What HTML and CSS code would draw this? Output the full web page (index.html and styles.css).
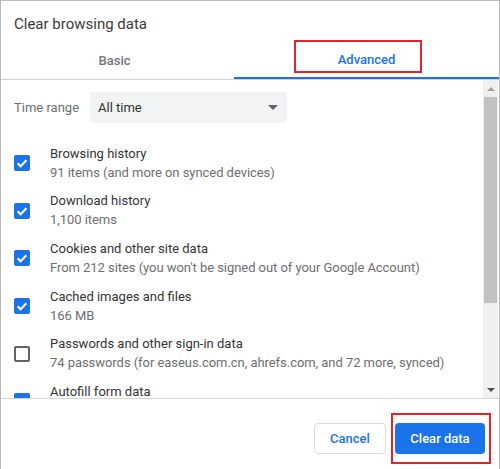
FILE: index.html
```html
<!DOCTYPE html>
<html lang="en">
<head>
    <meta charset="UTF-8">
    <title>Clear browsing data</title>
    <link rel="stylesheet" href="styles.css">
</head>
<body>
    <div class="dialog">
        <h1 class="dialog-title">Clear browsing data</h1>

        <div class="tabs">
            <div class="tab">Basic</div>
            <div class="tab active">
                Advanced
                <span class="highlight tab-highlight"></span>
            </div>
        </div>

        <div class="body">
            <div class="list">
                <div class="time-range">
                    <span class="time-label">Time range</span>
                    <div class="select">
                        <span>All time</span>
                        <span class="select-arrow"></span>
                    </div>
                </div>

                <div class="item">
                    <span class="check on"><svg viewBox="0 0 16 16"><path d="M3.6 8.2l3 3 5.8-6" /></svg></span>
                    <div class="item-text">
                        <div class="item-title">Browsing history</div>
                        <div class="item-sub">91 items (and more on synced devices)</div>
                    </div>
                </div>
                <div class="item">
                    <span class="check on"><svg viewBox="0 0 16 16"><path d="M3.6 8.2l3 3 5.8-6" /></svg></span>
                    <div class="item-text">
                        <div class="item-title">Download history</div>
                        <div class="item-sub">1,100 items</div>
                    </div>
                </div>
                <div class="item">
                    <span class="check on"><svg viewBox="0 0 16 16"><path d="M3.6 8.2l3 3 5.8-6" /></svg></span>
                    <div class="item-text">
                        <div class="item-title">Cookies and other site data</div>
                        <div class="item-sub">From 212 sites (you won't be signed out of your Google Account)</div>
                    </div>
                </div>
                <div class="item">
                    <span class="check on"><svg viewBox="0 0 16 16"><path d="M3.6 8.2l3 3 5.8-6" /></svg></span>
                    <div class="item-text">
                        <div class="item-title">Cached images and files</div>
                        <div class="item-sub">166 MB</div>
                    </div>
                </div>
                <div class="item">
                    <span class="check"></span>
                    <div class="item-text">
                        <div class="item-title">Passwords and other sign-in data</div>
                        <div class="item-sub">74 passwords (for easeus.com.cn, ahrefs.com, and 72 more, synced)</div>
                    </div>
                </div>
                <div class="item">
                    <span class="check on"><svg viewBox="0 0 16 16"><path d="M3.6 8.2l3 3 5.8-6" /></svg></span>
                    <div class="item-text">
                        <div class="item-title">Autofill form data</div>
                    </div>
                </div>
            </div>

            <!-- classic scrollbar -->
            <div class="scrollbar">
                <span class="sb-arrow up"></span>
                <div class="sb-track">
                    <div class="sb-thumb"></div>
                </div>
                <span class="sb-arrow down"></span>
            </div>
        </div>

        <div class="footer">
            <button class="btn btn-cancel">Cancel</button>
            <button class="btn btn-primary">
                Clear data
                <span class="highlight btn-highlight"></span>
            </button>
        </div>
    </div>
</body>
</html>
```

FILE: styles.css
```css
:root {
    --blue: #1a73e8;
    --text: #333333;
    --muted: #6e6e6e;
    --line: #dadce0;
    --frame: #b9b9b9;
    --mark: #e8212b;
}

* {
    box-sizing: border-box;
}

body {
    margin: 0;
    font-family: Roboto, "Liberation Sans", sans-serif;
    color: var(--text);
    background: #fff;
}

.dialog {
    width: 500px;
    height: 469px;
    border: 1px solid var(--frame);
    border-bottom: none;
    display: flex;
    flex-direction: column;
    overflow: hidden;
}

.dialog-title {
    margin: 0;
    padding: 14px 0 0 13px;
    height: 39px;
    font-size: 15px;
    font-weight: 400;
    line-height: 18px;
    color: #3a3a3a;
}

/* tab strip */
.tabs {
    display: grid;
    grid-template-columns: 233px 1fr;
    height: 40px;
    border-bottom: 1px solid #d2d2d2;
}

.tab {
    position: relative;
    display: flex;
    align-items: center;
    justify-content: center;
    font-size: 13px;
    font-weight: 500;
    color: #747474;
    padding: 1px 6px 0 0;
}

.tab.active {
    color: var(--blue);
    border-bottom: 2px solid var(--blue);
    padding: 1px 0 0 0;
}

.highlight {
    position: absolute;
    border: 2px solid var(--mark);
    pointer-events: none;
}

.tab-highlight {
    left: 60px;
    top: 0;
    width: 128px;
    height: 33px;
}

/* scrolling body */
.body {
    display: flex;
    height: 319px;
    border-bottom: 1px solid #d6d6d6;
}

.list {
    flex: 1;
    overflow: hidden;
    padding: 12px 0 0 13px;
}

.time-range {
    display: flex;
    align-items: center;
    height: 31px;
    margin-bottom: 16px;
}

.time-label {
    width: 76px;
    font-size: 13px;
    color: var(--muted);
}

.select {
    width: 197px;
    height: 31px;
    background: #f1f3f4;
    border-radius: 4px;
    display: flex;
    align-items: center;
    justify-content: space-between;
    padding: 0 9px 0 8px;
    font-size: 13px;
    color: var(--text);
}

.select-arrow {
    width: 0;
    height: 0;
    border-left: 5px solid transparent;
    border-right: 5px solid transparent;
    border-top: 5px solid #5f6368;
}

.item {
    display: flex;
    align-items: center;
    padding: 4.8px 0;
}

.item-text {
    min-height: 38px;
}

.check {
    flex: none;
    width: 16px;
    height: 16px;
    margin: 1px 20px 0 0;
    border: 2px solid #5f6368;
    border-radius: 2px;
    display: flex;
}

.check.on {
    background: var(--blue);
    border-color: var(--blue);
}

.check svg {
    margin: -2px;
    width: 16px;
    height: 16px;
    flex: none;
}

.check path {
    fill: none;
    stroke: #fff;
    stroke-width: 2;
}

.item-title,
.item-sub {
    font-size: 13px;
    line-height: 19px;
    white-space: nowrap;
}

.item-title {
    color: var(--text);
}

.item-sub {
    color: var(--muted);
    letter-spacing: -0.05px;
}

.scrollbar {
    flex: none;
    width: 15px;
    margin-right: 1px;
    background: #f0f0f0;
    display: flex;
    flex-direction: column;
    align-items: center;
}

.sb-arrow {
    flex: none;
    height: 17px;
    width: 15px;
    display: flex;
    align-items: center;
    justify-content: center;
}

.sb-arrow::before {
    content: "";
    border-left: 4px solid transparent;
    border-right: 4px solid transparent;
}

.sb-arrow.up::before {
    border-bottom: 4px solid #a3a3a3;
}

.sb-arrow.down::before {
    border-top: 4px solid #505050;
}

.sb-track {
    flex: 1;
    width: 100%;
    display: flex;
    justify-content: center;
}

.sb-thumb {
    width: 13px;
    height: 206px;
    background: #c1c1c1;
}

/* action buttons */
.footer {
    flex: 1;
    display: flex;
    justify-content: flex-end;
    align-items: flex-start;
    gap: 9px;
    padding: 24px 14px 0 0;
}

.btn {
    position: relative;
    height: 31px;
    border-radius: 4px;
    font-family: Roboto, "Liberation Sans", sans-serif;
    font-size: 13px;
    font-weight: 500;
    cursor: pointer;
}

.btn-cancel {
    width: 72px;
    background: #fff;
    border: 1px solid var(--line);
    color: var(--blue);
}

.btn-primary {
    width: 90px;
    background: var(--blue);
    border: none;
    color: #fff;
}

.btn-highlight {
    left: -4px;
    top: -10px;
    width: 100px;
    height: 51px;
}
```
